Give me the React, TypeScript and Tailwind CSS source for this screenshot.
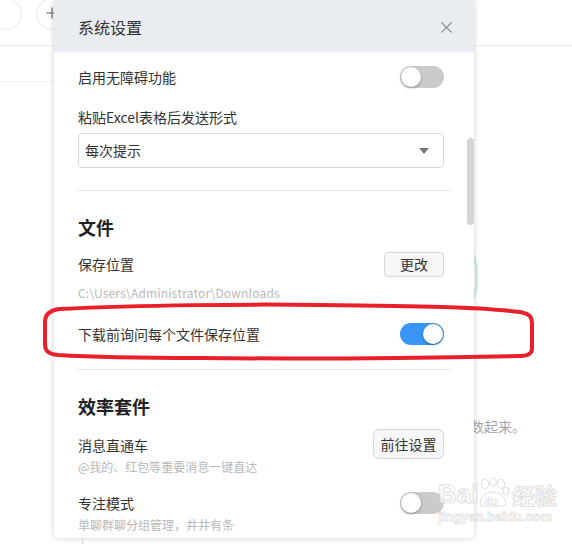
import React from "react";

const font = { fontFamily: '"Noto Sans CJK SC", "Noto Sans", sans-serif' };

function Toggle({ on }: { on?: boolean }) {
  return (
    <div
      className={
        "flex h-[22px] w-[44px] shrink-0 items-center rounded-full p-[1px] " +
        (on ? "justify-end bg-[#3895f6]" : "justify-start bg-[#cbcbcb]")
      }
    >
      <div className="h-[20px] w-[20px] rounded-full bg-white shadow-[0_1px_3px_rgba(0,0,0,0.35)]" />
    </div>
  );
}

export default function App() {
  return (
    <div
      className="relative h-[544px] w-[572px] overflow-hidden bg-white text-[#333]"
      style={font}
    >
      {/* background page */}
      <div className="absolute left-[-10px] top-[-2px] h-[32px] w-[32px] rounded-full border border-[#e6e6e6]" />
      <div className="absolute left-[36px] top-[-2px] flex h-[32px] w-[32px] items-center justify-center rounded-full border border-[#e6e6e6]">
        <svg width="12" height="12" viewBox="0 0 12 12" className="-mt-[2px]">
          <path d="M6 0.5v11M0.5 6h11" stroke="#8a8a8a" strokeWidth="1.6" />
        </svg>
      </div>
      <div className="absolute left-0 right-0 top-[45px] h-px bg-[#ececec]" />
      <div className="absolute left-0 top-[81px] h-px w-[60px] bg-[#f0f0f0]" />
      <div className="absolute left-[400px] top-[232px] h-[90px] w-[78px] rounded-full border-[3px] border-[#d3efe3]" />
      <div className="absolute left-[470px] top-[416px] text-[14px] leading-[20px] text-[#a8a8a8]">
        数起来。
      </div>
      <div className="absolute left-[82px] top-[470px] h-[80px] w-px bg-[#dcdcdc]" />

      {/* dialog */}
      <div className="absolute left-[54px] top-0 flex h-[538px] w-[420px] flex-col overflow-hidden rounded-b-[5px] bg-white shadow-[0_0_6px_rgba(0,0,0,0.18)]">
        <div className="flex h-[52px] shrink-0 items-center justify-between bg-[#e9ecf1] pl-[24px] pr-[22px] pt-[2px]">
          <span className="text-[16px] text-[#333]">系统设置</span>
          <svg width="11" height="11" viewBox="0 0 11 11">
            <path d="M0.5 0.5L10.5 10.5M10.5 0.5L0.5 10.5" stroke="#8b909a" strokeWidth="1.1" />
          </svg>
        </div>

        <div className="flex flex-col px-[24px] text-[14px]">
          <div className="flex h-[50px] items-center justify-between pr-[6px]">
            <span>启用无障碍功能</span>
            <Toggle />
          </div>
          <div className="flex h-[31px] items-center">粘贴Excel表格后发送形式</div>
          <div className="mr-[6px] flex h-[35px] items-center justify-between rounded-[4px] border border-[#d9d9d9] pl-[6px] pr-[14px]">
            <span>每次提示</span>
            <div className="h-0 w-0 border-x-[5px] border-t-[6px] border-x-transparent border-t-[#7a7a7a]" />
          </div>
          <div className="mt-[22px] h-px bg-[#e6e6e6]" />

          <div className="mt-[18px] flex h-[36px] items-center text-[18px] font-bold text-[#222]">文件</div>
          <div className="flex h-[39px] items-center justify-between pr-[6px]">
            <span>保存位置</span>
            <div className="flex h-[25px] w-[60px] items-center justify-center rounded-[4px] border border-[#d6d6d6] bg-[#f7f7f7]">
              更改
            </div>
          </div>
          <div className="flex h-[18px] items-center text-[12px] tracking-[0.2px] text-[#b8b8b8]">
            C:\Users\Administrator\Downloads
          </div>
          <div className="mt-[10px] flex h-[44px] items-center justify-between pr-[6px]">
            <span>下载前询问每个文件保存位置</span>
            <Toggle on />
          </div>
          <div className="mt-[13px] h-px bg-[#e6e6e6]" />

          <div className="mt-[18px] flex h-[36px] items-center text-[18px] font-bold text-[#222]">效率套件</div>
          <div className="mt-[5px] flex items-start justify-between pr-[6px]">
            <div className="flex flex-col pt-[6px]">
              <span className="leading-[20px]">消息直通车</span>
              <span className="mt-[4px] text-[12px] leading-[16px] text-[#b8b8b8]">
                @我的、红包等重要消息一键直达
              </span>
            </div>
            <div className="flex h-[30px] w-[71px] items-center justify-center rounded-[6px] border border-[#d6d6d6] bg-[#f7f7f7]">
              前往设置
            </div>
          </div>
          <div className="mt-[16px] flex h-[24px] items-center justify-between pr-[6px]">
            <span>专注模式</span>
            <Toggle />
          </div>
          <span className="mt-[2px] text-[12px] leading-[16px] text-[#b8b8b8]">
            单聊群聊分组管理，井井有条
          </span>
        </div>

        <div className="absolute right-0 top-[138px] h-[87px] w-[7px] rounded-full bg-[#d4d5d7]" />
      </div>

      {/* watermark */}
      <div className="pointer-events-none absolute left-[438px] top-[478px] flex flex-col items-start opacity-70">
        <div className="flex items-end">
          <span
            className="text-[26px] font-bold leading-[28px] text-white [-webkit-text-stroke:1px_#d2d2d2]"
            style={{ fontFamily: '"Liberation Sans", sans-serif' }}
          >
            Bai
          </span>
          <svg width="34" height="30" viewBox="0 0 34 30" className="-ml-[2px]">
            <g fill="white" stroke="#d2d2d2" strokeWidth="1">
              <ellipse cx="9" cy="6" rx="3.5" ry="4.5" />
              <ellipse cx="17" cy="4" rx="3.5" ry="4" />
              <ellipse cx="25" cy="6" rx="3.5" ry="4.5" />
              <ellipse cx="30" cy="13" rx="3" ry="4" />
              <path d="M5 28 C2 22 8 14 17 14 C26 14 32 22 29 28 Z" />
            </g>
            <text x="8" y="27" fontSize="11" fontWeight="bold" fill="white" stroke="#d2d2d2" strokeWidth="0.6" fontFamily="Liberation Sans">du</text>
          </svg>
          <span className="ml-[2px] text-[22px] font-bold leading-[28px] text-white [-webkit-text-stroke:1px_#d2d2d2]">
            经验
          </span>
        </div>
        <span
          className="mt-[1px] text-[13px] font-bold leading-[16px] text-white [-webkit-text-stroke:0.8px_#d6d6d6]"
          style={{ fontFamily: '"Liberation Sans", sans-serif' }}
        >
          jingyan.baidu.com
        </span>
      </div>

      {/* red annotation */}
      <svg className="pointer-events-none absolute left-0 top-0" width="572" height="544">
        <path
          d="M60 309 C140 305 250 304 320 305 C420 306 480 307 520 312 C531 314 532 318 532 324 L532 348 C532 354 528 356 518 356 C420 358 300 359 200 358 C140 358 90 357 58 355 C47 354 45 350 45 344 L45 322 C45 314 50 310 60 309 Z"
          fill="none"
          stroke="#e8202a"
          strokeWidth="4"
        />
      </svg>
    </div>
  );
}
